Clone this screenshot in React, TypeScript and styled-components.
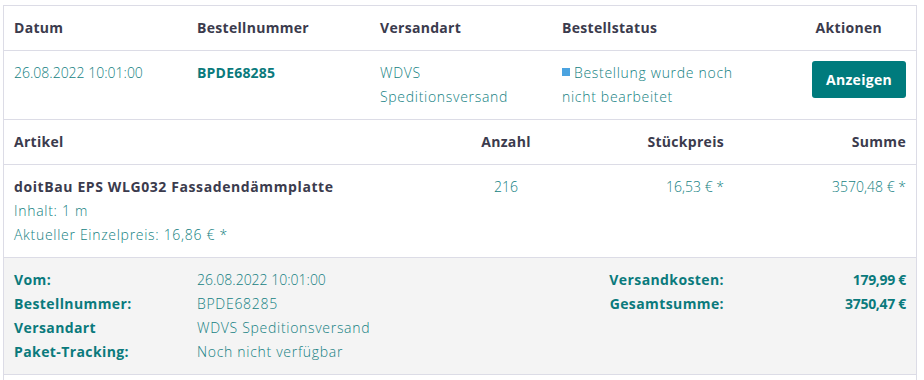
import { createGlobalStyle, styled } from "styled-components";

const GlobalStyle = createGlobalStyle`
    body {
        margin: 0;
        background: #ffffff;
        font-family: "Open Sans", "Liberation Sans", sans-serif;
        font-size: 14px;
        color: #3b3b4d;
    }
`;

const Wrapper = styled.div`
    margin: 5px 0 0 3px;
    width: 912px;
    border: 1px solid #dcdce6;
    border-bottom: 0;
`;

const OrderRow = styled.div`
    display: grid;
    grid-template-columns: 183px 183px 182px 200px 1fr;
    border-bottom: 1px solid #dcdce6;
`;

const ArticleRow = styled.div`
    display: grid;
    grid-template-columns: 442px 120px 168px 1fr;
    border-bottom: 1px solid #dcdce6;
`;

const Cell = styled.div<{ $align?: "left" | "center" | "right"; $pad?: number }>`
    padding: 10px ${(p) => p.$pad ?? 10}px 10px 10px;
    line-height: 24px;
    text-align: ${(p) => p.$align ?? "left"};
`;

const HeadText = styled.span`
    font-weight: 700;
    letter-spacing: 0.3px;
    color: #3b3b4d;
`;

const Value = styled.span<{ $num?: boolean }>`
    font-weight: 300;
    letter-spacing: ${(p) => (p.$num ? "0" : "0.7px")};
    color: #137f82;
`;

const OrderNumber = styled.span`
    font-weight: 700;
    letter-spacing: 0.2px;
    color: #0a7a7c;
`;

const StatusDot = styled.span`
    display: inline-block;
    width: 8px;
    height: 8px;
    margin-right: 4px;
    background: #4ba3e0;
    vertical-align: 2px;
`;

const ButtonCell = styled.div`
    display: flex;
    justify-content: flex-end;
    align-items: flex-start;
    padding: 10px;
`;

const ShowButton = styled.button`
    width: 94px;
    height: 37px;
    border: 0;
    border-radius: 3px;
    background: #007b7d;
    color: #ffffff;
    font-family: inherit;
    font-size: 14px;
    font-weight: 700;
    letter-spacing: 0.3px;
    cursor: pointer;
`;

const ProductName = styled.div`
    font-weight: 700;
    letter-spacing: 0.6px;
    color: #3b3b4d;
`;

const Footer = styled.div`
    display: flex;
    justify-content: space-between;
    background: #f4f4f4;
    padding: 10px 0;
    border-bottom: 1px solid #dcdce6;
`;

const InfoList = styled.div`
    display: grid;
    grid-template-columns: 183px auto;
    align-content: start;
`;

const TotalsList = styled.div`
    display: grid;
    grid-template-columns: auto 182px;
    align-content: start;
`;

const Label = styled.div<{ $align?: "left" | "right"; $num?: boolean }>`
    padding: 0 10px;
    line-height: 24px;
    font-weight: 700;
    letter-spacing: ${(p) => (p.$num ? "-0.3px" : "0.4px")};
    color: #0a7a7c;
    text-align: ${(p) => p.$align ?? "left"};
`;

const InfoValue = styled.div<{ $num?: boolean }>`
    padding: 0 10px;
    line-height: 24px;
    font-weight: 300;
    letter-spacing: ${(p) => (p.$num ? "0" : "0.7px")};
    color: #137f82;
`;

const NextOrder = styled.div`
    height: 40px;
`;

const details = [
    ["Vom:", "26.08.2022 10:01:00", true],
    ["Bestellnummer:", "BPDE68285", false],
    ["Versandart", "WDVS Speditionsversand", false],
    ["Paket-Tracking:", "Noch nicht verfügbar", false],
] as const;

const totals = [
    ["Versandkosten:", "179,99 €"],
    ["Gesamtsumme:", "3750,47 €"],
];

export default function App() {
    return <>
        <GlobalStyle />
        <Wrapper>
            <OrderRow>
                <Cell><HeadText>Datum</HeadText></Cell>
                <Cell><HeadText>Bestellnummer</HeadText></Cell>
                <Cell><HeadText>Versandart</HeadText></Cell>
                <Cell><HeadText>Bestellstatus</HeadText></Cell>
                <Cell $align="right" $pad={34}><HeadText>Aktionen</HeadText></Cell>
            </OrderRow>
            <OrderRow>
                <Cell><Value $num>26.08.2022 10:01:00</Value></Cell>
                <Cell><OrderNumber>BPDE68285</OrderNumber></Cell>
                <Cell><Value>WDVS Speditionsversand</Value></Cell>
                <Cell><StatusDot /><Value>Bestellung wurde noch nicht bearbeitet</Value></Cell>
                <ButtonCell><ShowButton>Anzeigen</ShowButton></ButtonCell>
            </OrderRow>
            <ArticleRow>
                <Cell><HeadText>Artikel</HeadText></Cell>
                <Cell $align="center"><HeadText>Anzahl</HeadText></Cell>
                <Cell $align="right"><HeadText>Stückpreis</HeadText></Cell>
                <Cell $align="right"><HeadText>Summe</HeadText></Cell>
            </ArticleRow>
            <ArticleRow>
                <Cell>
                    <ProductName>doitBau EPS WLG032 Fassadendämmplatte</ProductName>
                    <div><Value>Inhalt: 1 m</Value></div>
                    <div><Value>Aktueller Einzelpreis: 16,86 € *</Value></div>
                </Cell>
                <Cell $align="center"><Value $num>216</Value></Cell>
                <Cell $align="right"><Value $num>16,53 € *</Value></Cell>
                <Cell $align="right"><Value $num>3570,48 € *</Value></Cell>
            </ArticleRow>
            <Footer>
                <InfoList>
                    {details.map(([label, value, num]) => [
                        <Label key={label}>{label}</Label>,
                        <InfoValue key={label + "v"} $num={num}>{value}</InfoValue>,
                    ])}
                </InfoList>
                <TotalsList>
                    {totals.map(([label, value]) => [
                        <Label key={label} $align="right">{label}</Label>,
                        <Label key={label + "v"} $align="right" $num>{value}</Label>,
                    ])}
                </TotalsList>
            </Footer>
            <NextOrder />
        </Wrapper>
    </>
}
